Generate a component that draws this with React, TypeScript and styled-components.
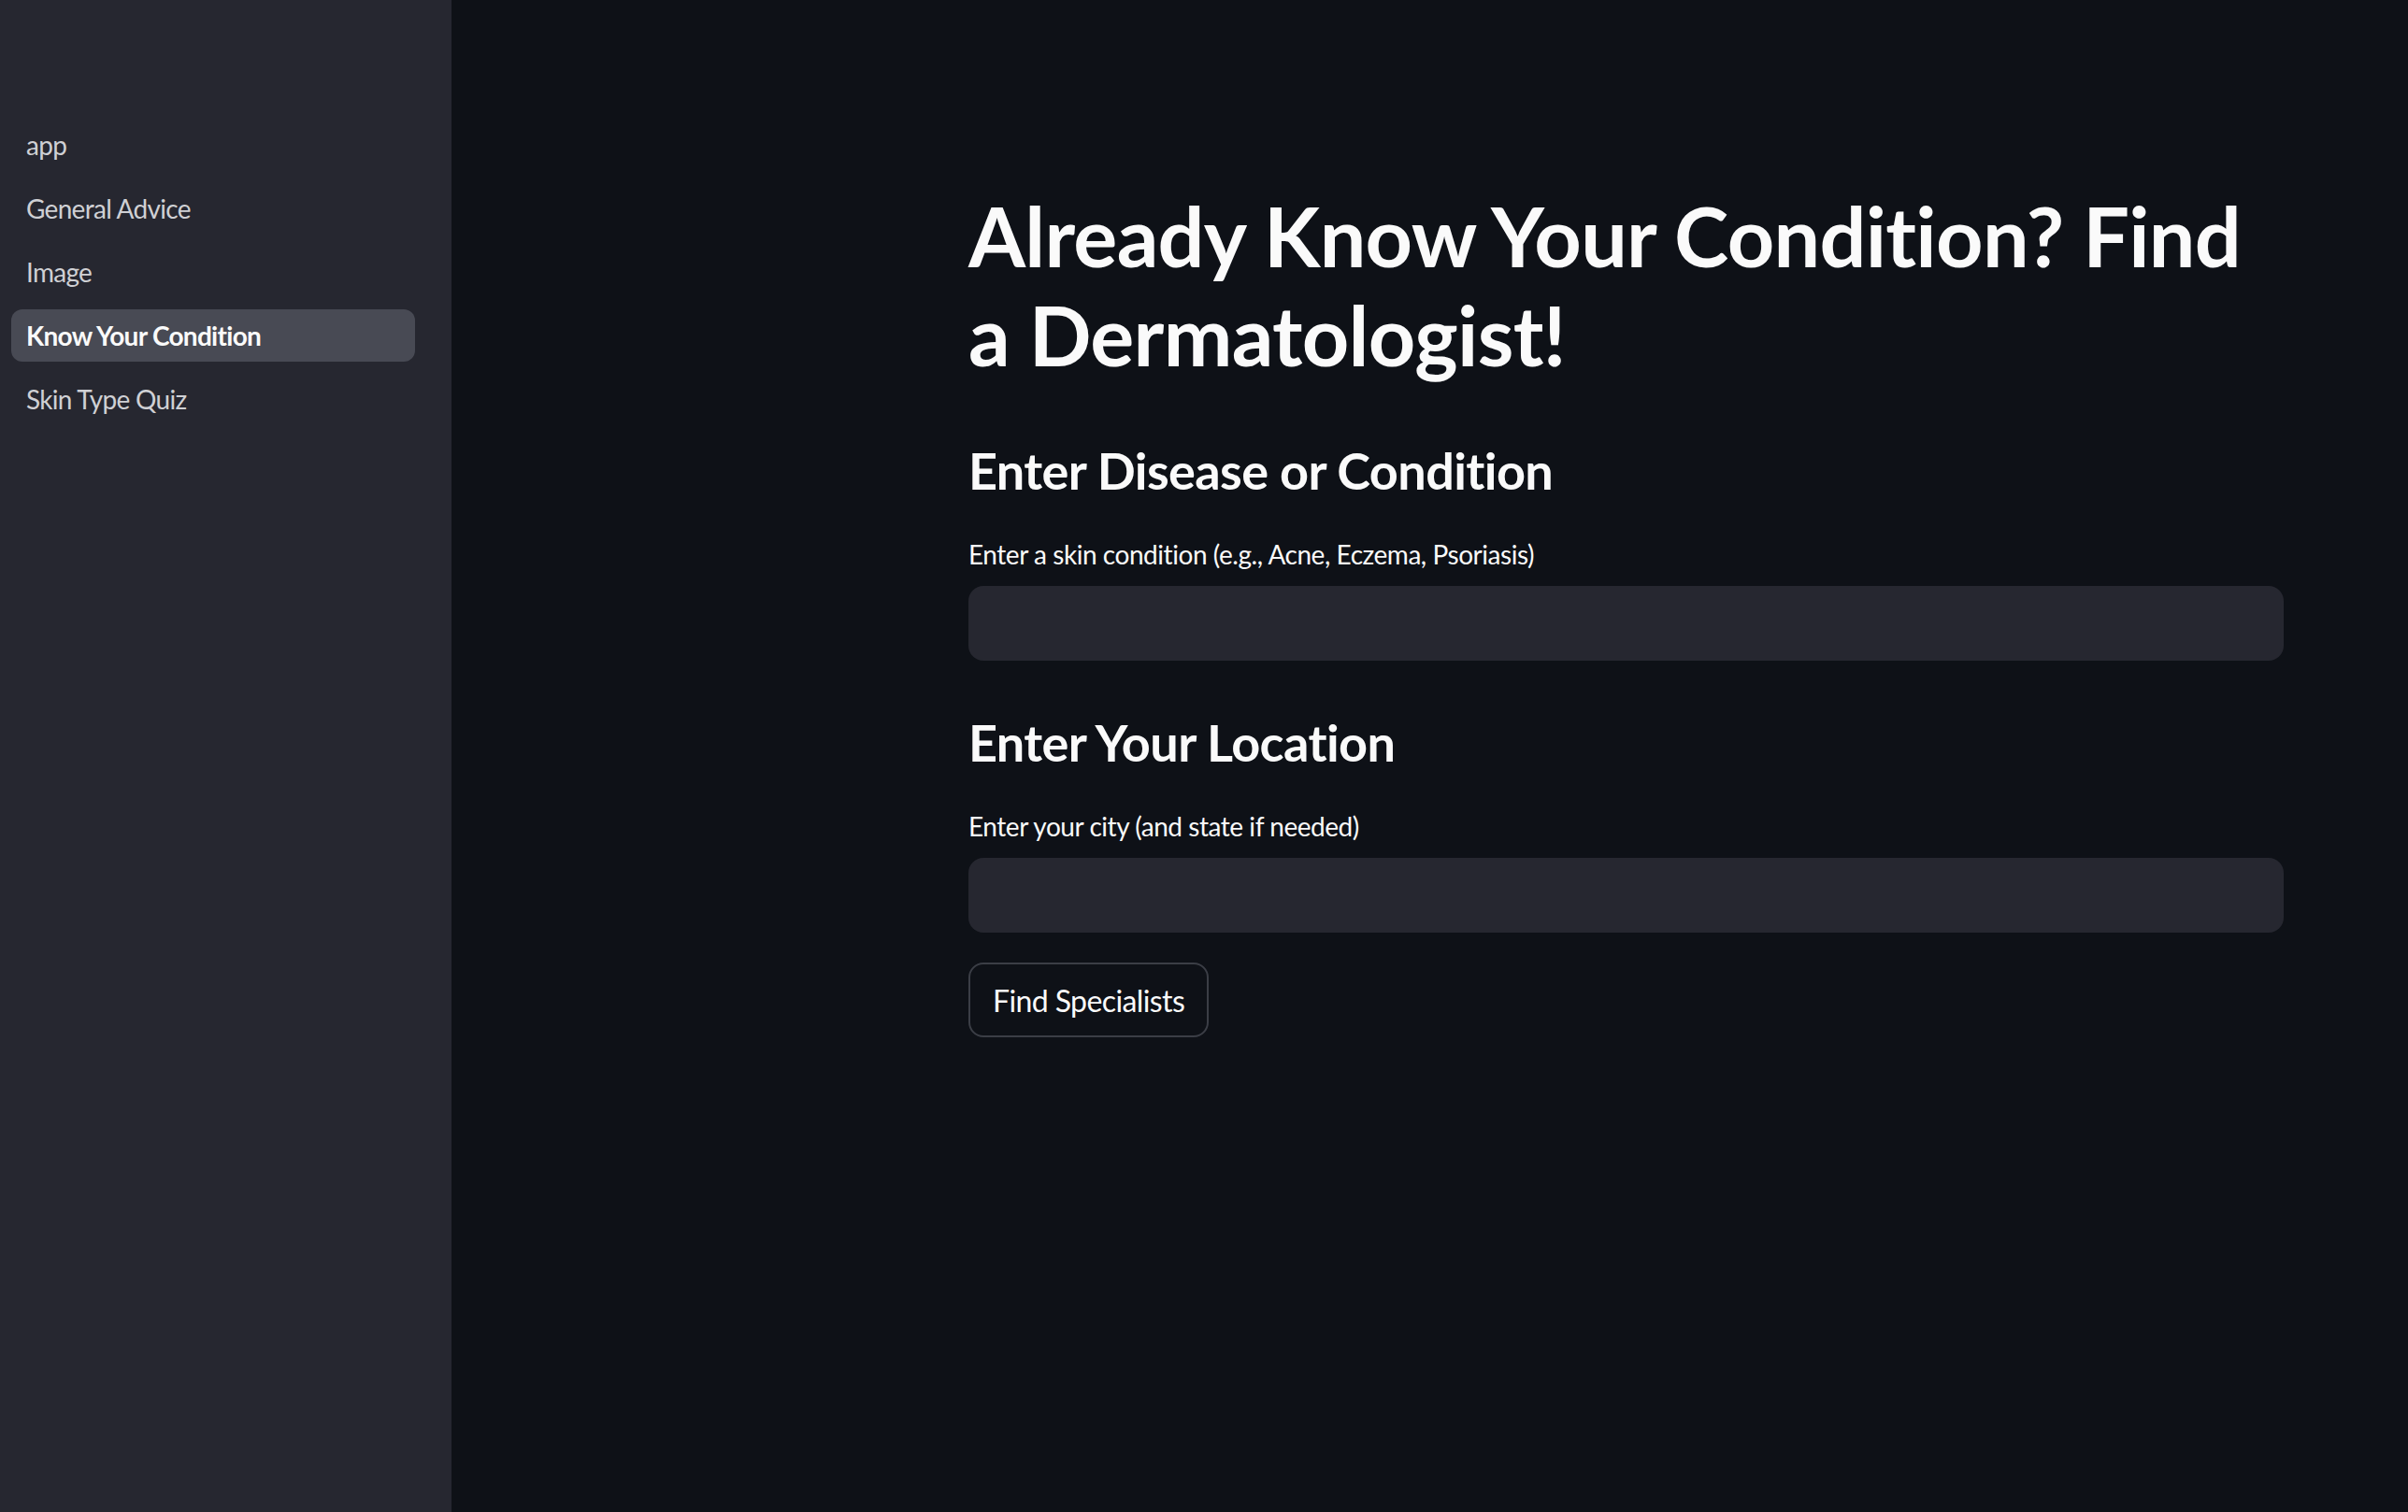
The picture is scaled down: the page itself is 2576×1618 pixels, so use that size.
import React from "react";
import styled, { createGlobalStyle } from "styled-components";

const Global = createGlobalStyle`
  html, body { margin: 0; padding: 0; background: #0e1117; }
  body { font-family: Lato, "Noto Sans", sans-serif; color: #fafafa; }
  * { box-sizing: border-box; }
`;

const Shell = styled.div`
  display: flex;
  width: 2576px;
  height: 1618px;
  overflow: hidden;
  background: #0e1117;
`;

const Sidebar = styled.aside`
  width: 483px;
  flex: 0 0 483px;
  height: 100%;
  background: #262730;
  padding: 127px 39px 0 12px;
`;

const NavList = styled.nav`
  display: flex;
  flex-direction: column;
  gap: 12px;
`;

const NavItem = styled.a<{ $active?: boolean }>`
  display: flex;
  align-items: center;
  height: 56px;
  padding: 0 16px;
  border-radius: 12px;
  font-size: 28px;
  font-weight: ${(p) => (p.$active ? 700 : 400)};
  color: ${(p) => (p.$active ? "#fafafa" : "#cfd0d4")};
  background: ${(p) => (p.$active ? "#484a54" : "transparent")};
  text-decoration: none;
  letter-spacing: -0.7px;
`;

const Main = styled.main`
  flex: 1;
  padding: 199px 0 0 553px;
`;

const Content = styled.div`
  width: 1407px;
  display: flex;
  flex-direction: column;
`;

const Title = styled.h1`
  margin: 0;
  font-size: 88px;
  line-height: 106px;
  font-weight: 700;
  letter-spacing: -0.7px;
  color: #fafafa;
`;

const SubHeader = styled.h3<{ $gap: number }>`
  margin: ${(p) => p.$gap}px 0 0;
  font-size: 54px;
  line-height: 72px;
  font-weight: 700;
  letter-spacing: -0.6px;
  color: #fafafa;
`;

const Label = styled.label`
  display: block;
  margin-top: 33px;
  font-size: 28px;
  line-height: 40px;
  color: #fafafa;
  letter-spacing: -0.45px;
`;

const Input = styled.input`
  display: block;
  margin-top: 14px;
  width: 100%;
  height: 80px;
  border: none;
  outline: none;
  border-radius: 16px;
  background: #262730;
  color: #fafafa;
  font-family: inherit;
  font-size: 32px;
  padding: 0 24px;
`;

const Button = styled.button`
  align-self: flex-start;
  margin-top: 32px;
  height: 80px;
  padding: 0 24px;
  border: 2px solid #3b3e46;
  border-radius: 16px;
  background: #0e1117;
  color: #fafafa;
  font-family: inherit;
  font-size: 32px;
  letter-spacing: -0.6px;
`;

const navItems = ["app", "General Advice", "Image", "Know Your Condition", "Skin Type Quiz"];

export default function App() {
  return (
    <>
      <Global />
      <Shell>
        <Sidebar>
          <NavList>
            {navItems.map((n) => (
              <NavItem key={n} $active={n === "Know Your Condition"}>
                {n}
              </NavItem>
            ))}
          </NavList>
        </Sidebar>
        <Main>
          <Content>
            <Title>Already Know Your Condition? Find a Dermatologist!</Title>
            <SubHeader $gap={57}>Enter Disease or Condition</SubHeader>
            <Label>Enter a skin condition (e.g., Acne, Eczema, Psoriasis)</Label>
            <Input />
            <SubHeader $gap={52}>Enter Your Location</SubHeader>
            <Label>Enter your city (and state if needed)</Label>
            <Input />
            <Button>Find Specialists</Button>
          </Content>
        </Main>
      </Shell>
    </>
  );
}
